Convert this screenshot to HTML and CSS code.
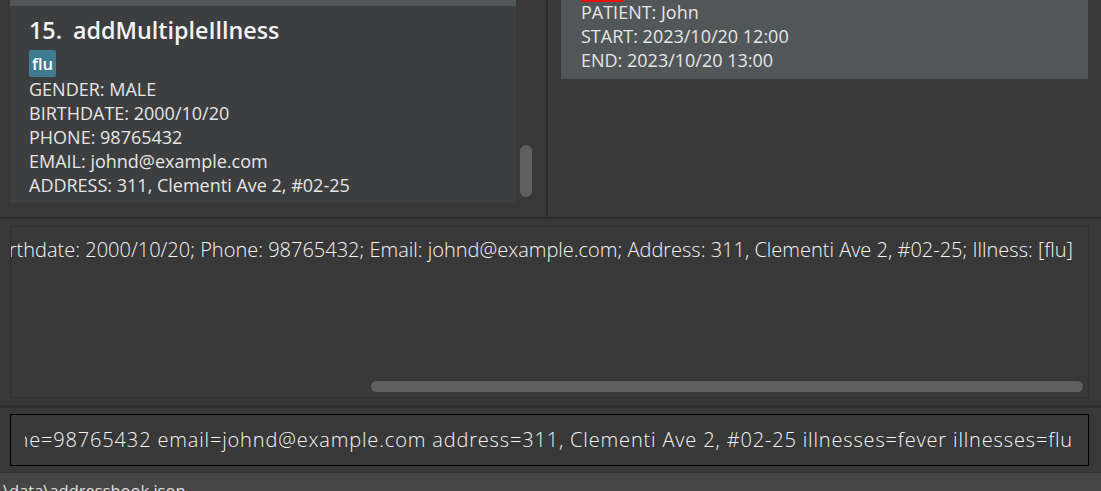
FILE: index.html
```html
<!DOCTYPE html>
<html>
<head>
<meta charset="utf-8">
<link rel="stylesheet" href="styles.css">
</head>
<body>
<div class="app">
  <div class="top">
    <div class="left-pane">
      <div class="list">
        <div class="card-prev"></div>
        <div class="card">
          <div class="title"><span class="idx">15.</span><span class="name">addMultipleIllness</span></div>
          <div class="tags"><span class="tag">flu</span></div>
          <div class="field">GENDER: MALE</div>
          <div class="field">BIRTHDATE: 2000/10/20</div>
          <div class="field">PHONE: 98765432</div>
          <div class="field">EMAIL: johnd@example.com</div>
          <div class="field">ADDRESS: 311, Clementi Ave 2, #02-25</div>
        </div>
      </div>
      <div class="vscroll"><div class="vthumb"></div></div>
    </div>
    <div class="right-pane">
      <div class="appt">
        <span class="appt-tag"></span>
        <div class="field">PATIENT: John</div>
        <div class="field">START: 2023/10/20 12:00</div>
        <div class="field">END: 2023/10/20 13:00</div>
      </div>
    </div>
  </div>
  <div class="result-area">
    <div class="result-box">
      <div class="result-text"><span>New person added: addMultipleIllness; Gender: MALE; Birthdate: 2000/10/20; Phone: 98765432; Email: johnd@example.com; Address: 311, Clementi Ave 2, #02-25; Illness: [flu]</span></div>
      <div class="hscroll"><div class="hthumb"></div></div>
    </div>
  </div>
  <div class="command-area">
    <div class="command-box">
      <div class="command-text"><span>add name=addMultipleIllness gender=MALE birthdate=2000/10/20 phone=98765432 email=johnd@example.com address=311, Clementi Ave 2, #02-25 illnesses=fever illnesses=flu</span></div>
    </div>
  </div>
  <div class="status-bar"><span>\data\addressbook.json</span></div>
</div>
</body>
</html>
```
FILE: styles.css
```css
html, body {
  margin: 0;
  padding: 0;
  background: #383838;
  overflow: hidden;
}
body {
  font-family: "Open Sans", "Noto Sans", sans-serif;
  color: #ffffff;
}
.app {
  width: 1101px;
  height: 491px;
  display: flex;
  flex-direction: column;
}
.top {
  height: 217px;
  flex: none;
  display: flex;
  border-bottom: 2px solid #2a2a2a;
}
.left-pane {
  width: 548px;
  border-right: 2px solid #2a2a2a;
  display: flex;
  padding-left: 10px;
  box-sizing: border-box;
  overflow: hidden;
}
.list {
  width: 506px;
  display: flex;
  flex-direction: column;
}
.card-prev {
  height: 6px;
  background: #515658;
}
.card {
  height: 197px;
  background: #3c3e40;
  padding: 9px 0 0 19px;
  box-sizing: border-box;
}
.title {
  font-size: 23.3px;
  font-weight: 600;
  line-height: 31px;
  color: #f2f2f2;
  display: flex;
  gap: 11px;
}
.tags {
  display: flex;
  margin-top: 4px;
}
.tag {
  background: #3e7b91;
  color: #ffffff;
  font-size: 16.5px;
  font-weight: 600;
  line-height: 27px;
  height: 27px;
  padding: 0 3px;
  border-radius: 2px;
}
.field {
  font-size: 18px;
  line-height: 24px;
  color: #e6e6e6;
  white-space: nowrap;
}
.vscroll {
  width: 16px;
  padding: 145px 0 0 4px;
}
.vthumb {
  width: 12px;
  height: 52px;
  border-radius: 6px;
  background: #5f5f5f;
}
.right-pane {
  flex: 1;
  padding: 0 13px 0 13px;
}
.appt {
  position: relative;
  height: 79px;
  background: #515658;
  padding: 0 0 0 20px;
  box-sizing: border-box;
}
.appt-tag {
  position: absolute;
  left: 20px;
  top: 0;
  width: 42px;
  height: 2px;
  background: #e81010;
}
.result-area {
  height: 189px;
  flex: none;
  padding: 7px 12px 0 10px;
  box-sizing: border-box;
  border-bottom: 3px solid #2e2e2e;
}
.result-box {
  height: 172px;
  border: 1px solid #2f2f2f;
  box-sizing: border-box;
  display: flex;
  flex-direction: column;
}
.result-text {
  display: flex;
  justify-content: flex-end;
  overflow: hidden;
  white-space: nowrap;
  font-size: 20px;
  font-weight: 300;
  line-height: 27px;
  padding: 9px 15px 0 0;
  color: #f5f5f5;
  flex: 1;
}
.hscroll {
  height: 16px;
  padding: 0 5px 0 360px;
}
.hthumb {
  height: 11px;
  border-radius: 6px;
  background: #5f5f5f;
}
.command-area {
  height: 65px;
  flex: none;
  padding: 6px 12px 0 10px;
  box-sizing: border-box;
  border-bottom: 1px solid #2e2e2e;
}
.command-box {
  height: 52px;
  border: 1px solid #000000;
  box-sizing: border-box;
  display: flex;
  align-items: center;
  padding: 0 15px 1px 14px;
}
.command-text {
  flex: 1;
  display: flex;
  justify-content: flex-end;
  overflow: hidden;
  white-space: nowrap;
  font-size: 20px;
  font-weight: 300;
  letter-spacing: 0.84px;
  color: #f5f5f5;
}
.status-bar {
  flex: 1;
  background: #454545;
  font-size: 16.5px;
  color: #e0e0e0;
  padding: 6px 0 0 3px;
  overflow: hidden;
  white-space: nowrap;
}
```
